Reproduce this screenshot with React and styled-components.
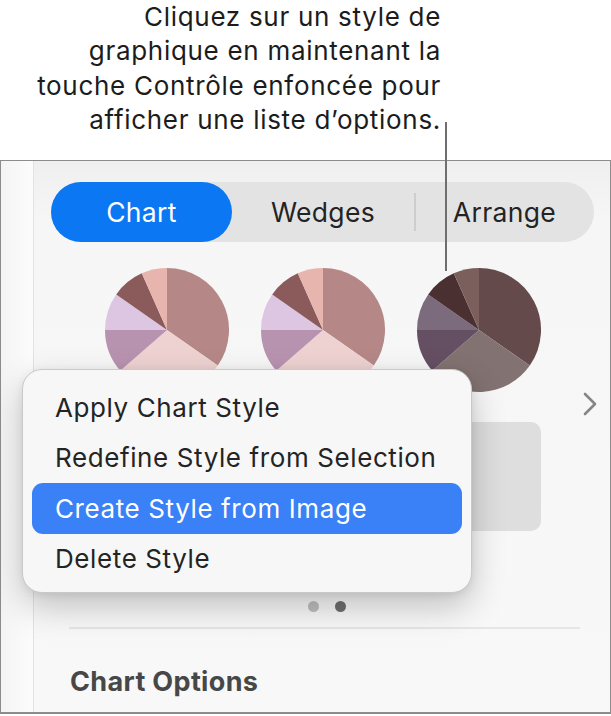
import React from "react";
import styled, { createGlobalStyle } from "styled-components";

const GlobalStyle = createGlobalStyle`
  html, body {
    margin: 0;
    padding: 0;
    background: #ffffff;
  }
  body {
    font-family: "Inter", "Liberation Sans", sans-serif;
    -webkit-font-smoothing: antialiased;
  }
`;

const lightPalette = ["#b58887", "#eed2d2", "#b893b0", "#dcc6e2", "#8b5b5c", "#e7b4ae"];
const darkPalette = ["#654a4b", "#827272", "#654f63", "#7b6b7d", "#4a3031", "#7b5f5c"];
const cuts = [0, 125, 229, 270, 305, 336, 360];

const polar = (r, deg) => {
  const a = ((deg - 90) * Math.PI) / 180;
  return [62 + r * Math.cos(a), 62 + r * Math.sin(a)];
};

const slicePath = (from, to) => {
  const [x1, y1] = polar(62, from);
  const [x2, y2] = polar(62, to);
  const large = to - from > 180 ? 1 : 0;
  return `M62 62 L${x1} ${y1} A62 62 0 ${large} 1 ${x2} ${y2} Z`;
};

const Pie = ({ colors }) => (
  <svg width="124" height="124" viewBox="0 0 124 124">
    {colors.map((c, i) => (
      <path key={i} d={slicePath(cuts[i], cuts[i + 1])} fill={c} />
    ))}
  </svg>
);

const Page = styled.div`
  position: relative;
  width: 611px;
  height: 716px;
  overflow: hidden;
`;

const Callout = styled.p`
  margin: 0;
  width: 441px;
  padding-top: 0;
  height: 160px;
  box-sizing: border-box;
  text-align: right;
  font-size: 26px;
  line-height: 34.4px;
  color: #1c1c1c;
  letter-spacing: 0.7px;
`;

const Leader = styled.div`
  position: absolute;
  left: 445px;
  top: 122px;
  width: 2px;
  height: 149px;
  background: #6e6e6e;
  z-index: 5;
`;

const Panel = styled.div`
  display: flex;
  height: 554px;
  border: 1.5px solid #8c8c8c;
  border-bottom-width: 2px;
  box-sizing: border-box;
  width: 611px;
`;

const Strip = styled.div`
  width: 32px;
  flex-shrink: 0;
  background: linear-gradient(90deg, #f4f4f4, #fcfcfc);
  border-right: 1.5px solid #e2e2e2;
`;

const Main = styled.div`
  flex: 1;
  display: flex;
  flex-direction: column;
  background: linear-gradient(180deg, #efefef 0px, #f6f6f6 60px, #f8f8f8 100%);
`;

const Segmented = styled.div`
  display: flex;
  align-items: center;
  margin: 21px 0 0 17px;
  width: 543px;
  height: 60px;
  border-radius: 30px;
  background: #e3e3e3;
`;

const Segment = styled.div`
  width: ${(p) => p.$w}px;
  height: 60px;
  border-radius: 30px;
  display: flex;
  align-items: center;
  justify-content: center;
  font-size: 26.5px;
  letter-spacing: 0.35px;
  color: ${(p) => (p.$active ? "#ffffff" : "#232323")};
  background: ${(p) => (p.$active ? "#0b77f2" : "transparent")};
`;

const SegDivider = styled.div`
  width: 1.5px;
  height: 38px;
  background: #cdcdcd;
`;

const StylesRow = styled.div`
  display: flex;
  align-items: center;
  margin: 26px 0 0 71px;
`;

const StyleGrid = styled.div`
  display: grid;
  grid-template-columns: repeat(3, 124px);
  column-gap: 32px;
  row-gap: 30px;
`;

const Thumb = styled.div`
  width: 124px;
  height: 109px;
  border-radius: 10px;
  background: #dedede;
`;

const Chevron = styled.svg`
  margin-left: 42px;
  margin-top: 8px;
`;

const Dots = styled.div`
  display: flex;
  justify-content: center;
  gap: 16px;
  margin: 70px 0 0 0;
  padding-left: 10px;
`;

const Dot = styled.span`
  width: 11px;
  height: 11px;
  border-radius: 50%;
  background: ${(p) => (p.$on ? "#6e6e6e" : "#bdbdbd")};
`;

const Divider = styled.div`
  margin: 15px 30px 0 35px;
  height: 2px;
  background: #e6e6e6;
`;

const SectionTitle = styled.h3`
  margin: 36px 0 0 36px;
  font-size: 27px;
  font-weight: 700;
  color: #474747;
  letter-spacing: 0.35px;
`;

const Menu = styled.div`
  position: absolute;
  left: 22px;
  top: 369px;
  width: 450px;
  height: 224px;
  box-sizing: border-box;
  padding: 12px 9px 8px;
  border-radius: 20px;
  background: #f7f7f7;
  border: 1.5px solid #c9c9c9;
  box-shadow: 0 14px 34px rgba(0, 0, 0, 0.22), 0 2px 8px rgba(0, 0, 0, 0.08);
  display: flex;
  flex-direction: column;
  z-index: 4;
`;

const MenuItem = styled.div`
  height: 51px;
  display: flex;
  align-items: center;
  padding-left: 23px;
  border-radius: 11px;
  font-size: 26px;
  letter-spacing: 0.6px;
  color: ${(p) => (p.$active ? "#ffffff" : "#242424")};
  background: ${(p) => (p.$active ? "#3a80f6" : "transparent")};
`;

export default function App() {
  return (
    <Page>
      <GlobalStyle />
      <Callout>
        Cliquez sur un style de
        <br />
        graphique en maintenant la
        <br />
        touche Contrôle enfoncée pour
        <br />
        afficher une liste d’options.
      </Callout>
      <Leader />
      <Panel>
        <Strip />
        <Main>
          <Segmented>
            <Segment $active $w={181}>Chart</Segment>
            <Segment $w={182}>Wedges</Segment>
            <SegDivider />
            <Segment $w={178}>Arrange</Segment>
          </Segmented>
          <StylesRow>
            <StyleGrid>
              <Pie colors={lightPalette} />
              <Pie colors={lightPalette} />
              <Pie colors={darkPalette} />
              <Thumb />
              <Thumb />
              <Thumb />
            </StyleGrid>
            <Chevron width="14" height="24" viewBox="0 0 14 24">
              <polyline
                points="2,2 12,12 2,22"
                fill="none"
                stroke="#858585"
                strokeWidth="2.6"
                strokeLinecap="round"
                strokeLinejoin="round"
              />
            </Chevron>
          </StylesRow>
          <Dots>
            <Dot />
            <Dot $on />
          </Dots>
          <Divider />
          <SectionTitle>Chart Options</SectionTitle>
        </Main>
      </Panel>
      <Menu>
        <MenuItem>Apply Chart Style</MenuItem>
        <MenuItem>Redefine Style from Selection</MenuItem>
        <MenuItem $active>Create Style from Image</MenuItem>
        <MenuItem>Delete Style</MenuItem>
      </Menu>
    </Page>
  );
}
